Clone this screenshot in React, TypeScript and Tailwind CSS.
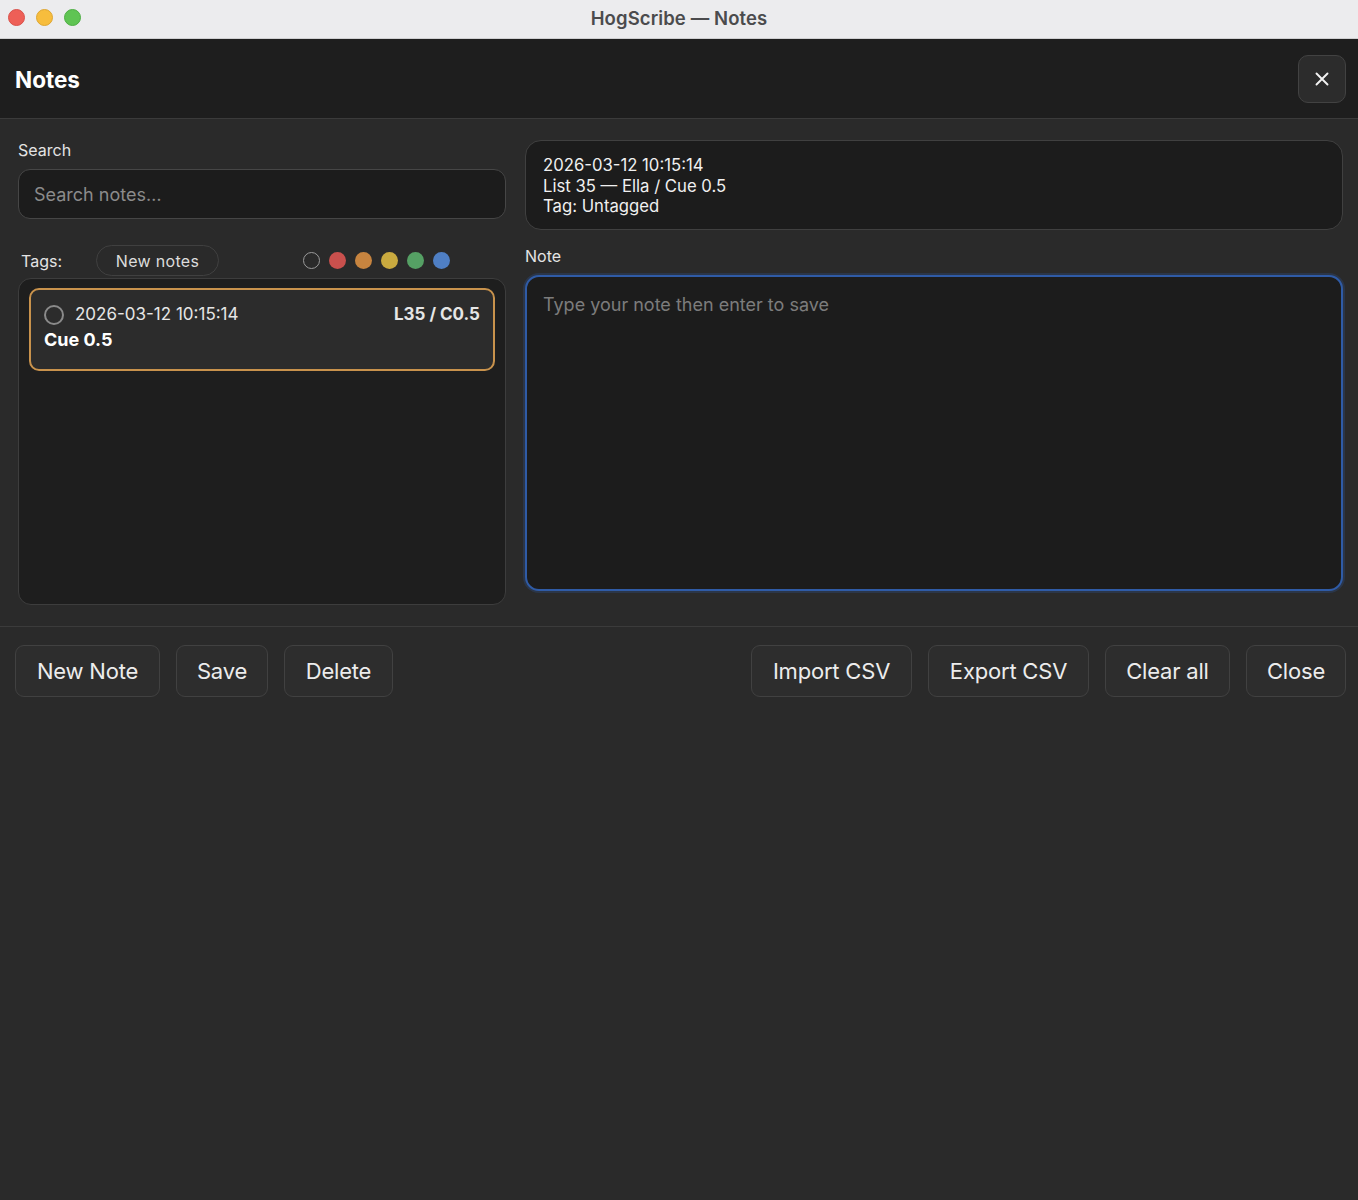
import React from "react";

const font = { fontFamily: "Inter, 'Noto Sans', 'Liberation Sans', sans-serif" };

function Btn({ children, w }: { children: React.ReactNode; w: string }) {
  return (
    <button className={`${w} h-[52px] rounded-[9px] bg-[#2d2d2d] border border-[#414141] text-[22px] text-[#ececec] tracking-[-0.2px] leading-none flex items-center justify-center`}>
      {children}
    </button>
  );
}

export default function App() {
  const dots = ["#c9504d", "#c7843f", "#c9aa3f", "#55a064", "#4f7fc4"];
  return (
    <div className="w-[1358px] h-[1200px] flex flex-col bg-[#2a2a2a] text-[#ececec] overflow-hidden" style={font}>
      {/* title bar */}
      <div className="h-[39px] shrink-0 bg-[#ececee] border-b border-[#cfcfd1] relative flex items-center justify-center">
        <div className="absolute left-[8px] top-[9px] flex gap-[11px]">
          <span className="w-[17px] h-[17px] rounded-full bg-[#ee5f57] border border-[#d9514a]" />
          <span className="w-[17px] h-[17px] rounded-full bg-[#f7bd3d] border border-[#dea632]" />
          <span className="w-[17px] h-[17px] rounded-full bg-[#5fc453] border border-[#4eae44]" />
        </div>
        <span className="text-[18.5px] font-semibold text-[#4b4b4d] tracking-[0.1px]">HogScribe — Notes</span>
      </div>

      {/* header */}
      <div className="h-[80px] shrink-0 bg-[#1e1e1e] border-b border-[#3b3b3b] flex items-center justify-between pl-[15px] pr-[12px]">
        <span className="pt-[3px] text-[22.5px] font-bold text-white">Notes</span>
        <button className="w-[48px] h-[48px] rounded-[10px] bg-[#2c2c2c] border border-[#424242] flex items-center justify-center">
          <svg width="14" height="14" viewBox="0 0 14 14">
            <path d="M1.5 1.5 L12.5 12.5 M12.5 1.5 L1.5 12.5" stroke="#f2f2f2" strokeWidth="1.9" strokeLinecap="round" />
          </svg>
        </button>
      </div>

      {/* body */}
      <div className="grid grid-cols-[488px_1fr] gap-[19px] pl-[18px] pr-[15px] pt-[21px] pb-[21px] border-b border-[#3b3b3b]">
        <div className="flex flex-col">
          <div className="text-[16px] leading-[20px] h-[20px] text-[#e4e4e4]">Search</div>
          <div className="mt-[9px] h-[50px] rounded-[12px] bg-[#1c1c1c] border border-[#464646] flex items-center px-[15px]">
            <span className="text-[18px] text-[#8b8b8b]">Search notes…</span>
          </div>
          <div className="mt-[26px] h-[31px] flex items-center">
            <span className="ml-[3px] text-[16px] text-[#e4e4e4]">Tags:</span>
            <span className="ml-[34px] h-[31px] w-[123px] rounded-full border border-[#404040] flex items-center justify-center text-[16px] text-[#dcdcdc] tracking-[0.3px]">New notes</span>
            <div className="ml-[84px] flex items-center gap-[9px]">
              <span className="w-[17px] h-[17px] rounded-full border-[1.5px] border-[#9a9a9a]" />
              {dots.map((c) => (
                <span key={c} className="w-[17px] h-[17px] rounded-full" style={{ backgroundColor: c }} />
              ))}
            </div>
          </div>
          <div className="mt-[2px] h-[327px] rounded-[13px] bg-[#1e1e1e] border border-[#3d3d3d] px-[10px] pt-[9px]">
            <div className="h-[83px] rounded-[10px] bg-[#2c2c2c] border-2 border-[#c8924c] px-[13px] pt-[12px]">
              <div className="flex items-center justify-between">
                <div className="flex items-center gap-[11px]">
                  <span className="w-[20px] h-[20px] rounded-full border-[2.5px] border-[#8a8a8a]" />
                  <span className="text-[17px] text-[#e6e6e6]">2026-03-12 10:15:14</span>
                </div>
                <span className="text-[17px] font-bold text-[#e6e6e6]">L35 / C0.5</span>
              </div>
              <div className="text-[18px] leading-[24px] font-bold text-white">Cue 0.5</div>
            </div>
          </div>
        </div>

        <div className="flex flex-col">
          <div className="h-[90px] rounded-[16px] bg-[#1c1c1c] border border-[#404040] px-[17px] pt-[14px] text-[16.7px] leading-[20.5px] text-[#f0f0f0]">
            <div>2026-03-12 10:15:14</div>
            <div>List 35 — Ella / Cue 0.5</div>
            <div>Tag: Untagged</div>
          </div>
          <div className="mt-[16px] text-[16px] leading-[20px] text-[#e4e4e4]">Note</div>
          <div className="mt-[9px] h-[316px] rounded-[14px] bg-[#1c1c1c] border-2 border-[#2f5ba6] shadow-[0_0_0_2px_rgba(47,91,166,0.25)] px-[16px] pt-[14px]">
            <span className="text-[18px] text-[#7c7c7c]">Type your note then enter to save</span>
          </div>
        </div>
      </div>

      {/* footer */}
      <div className="flex items-center justify-between pl-[15px] pr-[12px] pt-[18px]">
        <div className="flex gap-[16px]">
          <Btn w="w-[145px]">New Note</Btn>
          <Btn w="w-[92px]">Save</Btn>
          <Btn w="w-[109px]">Delete</Btn>
        </div>
        <div className="flex gap-[16px]">
          <Btn w="w-[161px]">Import CSV</Btn>
          <Btn w="w-[161px]">Export CSV</Btn>
          <Btn w="w-[125px]">Clear all</Btn>
          <Btn w="w-[100px]">Close</Btn>
        </div>
      </div>
    </div>
  );
}
